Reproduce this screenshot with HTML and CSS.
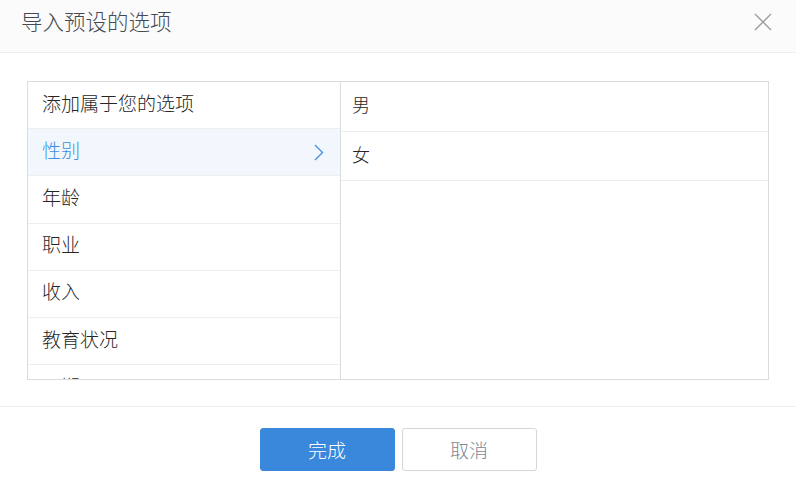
FILE: index.html
```html
<!DOCTYPE html>
<html lang="zh">
<head>
<meta charset="utf-8">
<link rel="stylesheet" href="styles.css">
</head>
<body>
<div class="dialog">
  <header class="head">
    <h1 class="title">导入预设的选项</h1>
    <svg class="close" width="18" height="18" viewBox="0 0 18 18"><path d="M1 1L17 17M17 1L1 17" stroke="#9a9a9a" stroke-width="1.3" fill="none"/></svg>
  </header>
  <main class="body">
    <div class="panel">
      <ul class="cats">
        <li class="cat">添加属于您的选项</li>
        <li class="cat active">性别<svg class="chev" width="10" height="17" viewBox="0 0 10 17"><path d="M1 1L8.5 8.5L1 16" stroke="#4a90e2" stroke-width="1.4" fill="none"/></svg></li>
        <li class="cat">年龄</li>
        <li class="cat">职业</li>
        <li class="cat">收入</li>
        <li class="cat">教育状况</li>
        <li class="cat">日期</li>
      </ul>
      <ul class="opts">
        <li class="opt">男</li>
        <li class="opt">女</li>
      </ul>
    </div>
  </main>
  <footer class="foot">
    <button class="btn primary">完成</button>
    <button class="btn">取消</button>
  </footer>
</div>
</body>
</html>
```
FILE: styles.css
```css
* { box-sizing: border-box; }
html, body { margin: 0; padding: 0; background: #fff; }
body { font-family: "Noto Sans CJK SC", "Noto Sans", sans-serif; font-weight: 300; width: 796px; height: 492px; overflow: hidden; }
.dialog { display: flex; flex-direction: column; height: 492px; }
.head {
  height: 53px;
  background: #fbfbfb;
  border-bottom: 1px solid #eeeeee;
  display: flex;
  align-items: center;
  justify-content: space-between;
  padding: 0 24px 11px 21px;
}
.title { margin: 0; font-size: 21.5px; font-weight: 300; color: #454a52; line-height: 1; }
.close { display: block; margin-top: 2px; }
.body { padding: 28px 27px 0 27px; height: 354px; border-bottom: 1px solid #eeeeee; }
.panel { display: flex; height: 299px; border: 1px solid #dcdcdc; }
.cats { list-style: none; margin: 0; padding: 0; width: 313px; border-right: 1px solid #dcdcdc; overflow: hidden; }
.cat {
  height: 47.2px;
  border-bottom: 1px solid #eeeeee;
  display: flex;
  align-items: center;
  justify-content: space-between;
  padding: 0 16px 6px 14px;
  font-size: 19px;
  color: #262626;
}
.cat.active { background: #f2f7fe; color: #3d8ee0; }
.chev { display: block; margin-top: 6px; }
.opts { list-style: none; margin: 0; padding: 0; flex: 1; }
.opt {
  height: 49.5px;
  border-bottom: 1px solid #eeeeee;
  display: flex;
  align-items: center;
  padding: 0 11px 4px;
  font-size: 18px;
  color: #262626;
}
.foot { display: flex; justify-content: center; gap: 7px; padding-top: 21px; }
.btn {
  width: 135px;
  height: 43px;
  border: 1px solid #d4d6da;
  border-radius: 3px;
  background: #fff;
  color: #7d8793;
  font-family: inherit;
  font-weight: 300;
  font-size: 19px;
  padding: 0;
}
.btn.primary { background: #3a88db; border-color: #3a88db; color: #fff; }
```
